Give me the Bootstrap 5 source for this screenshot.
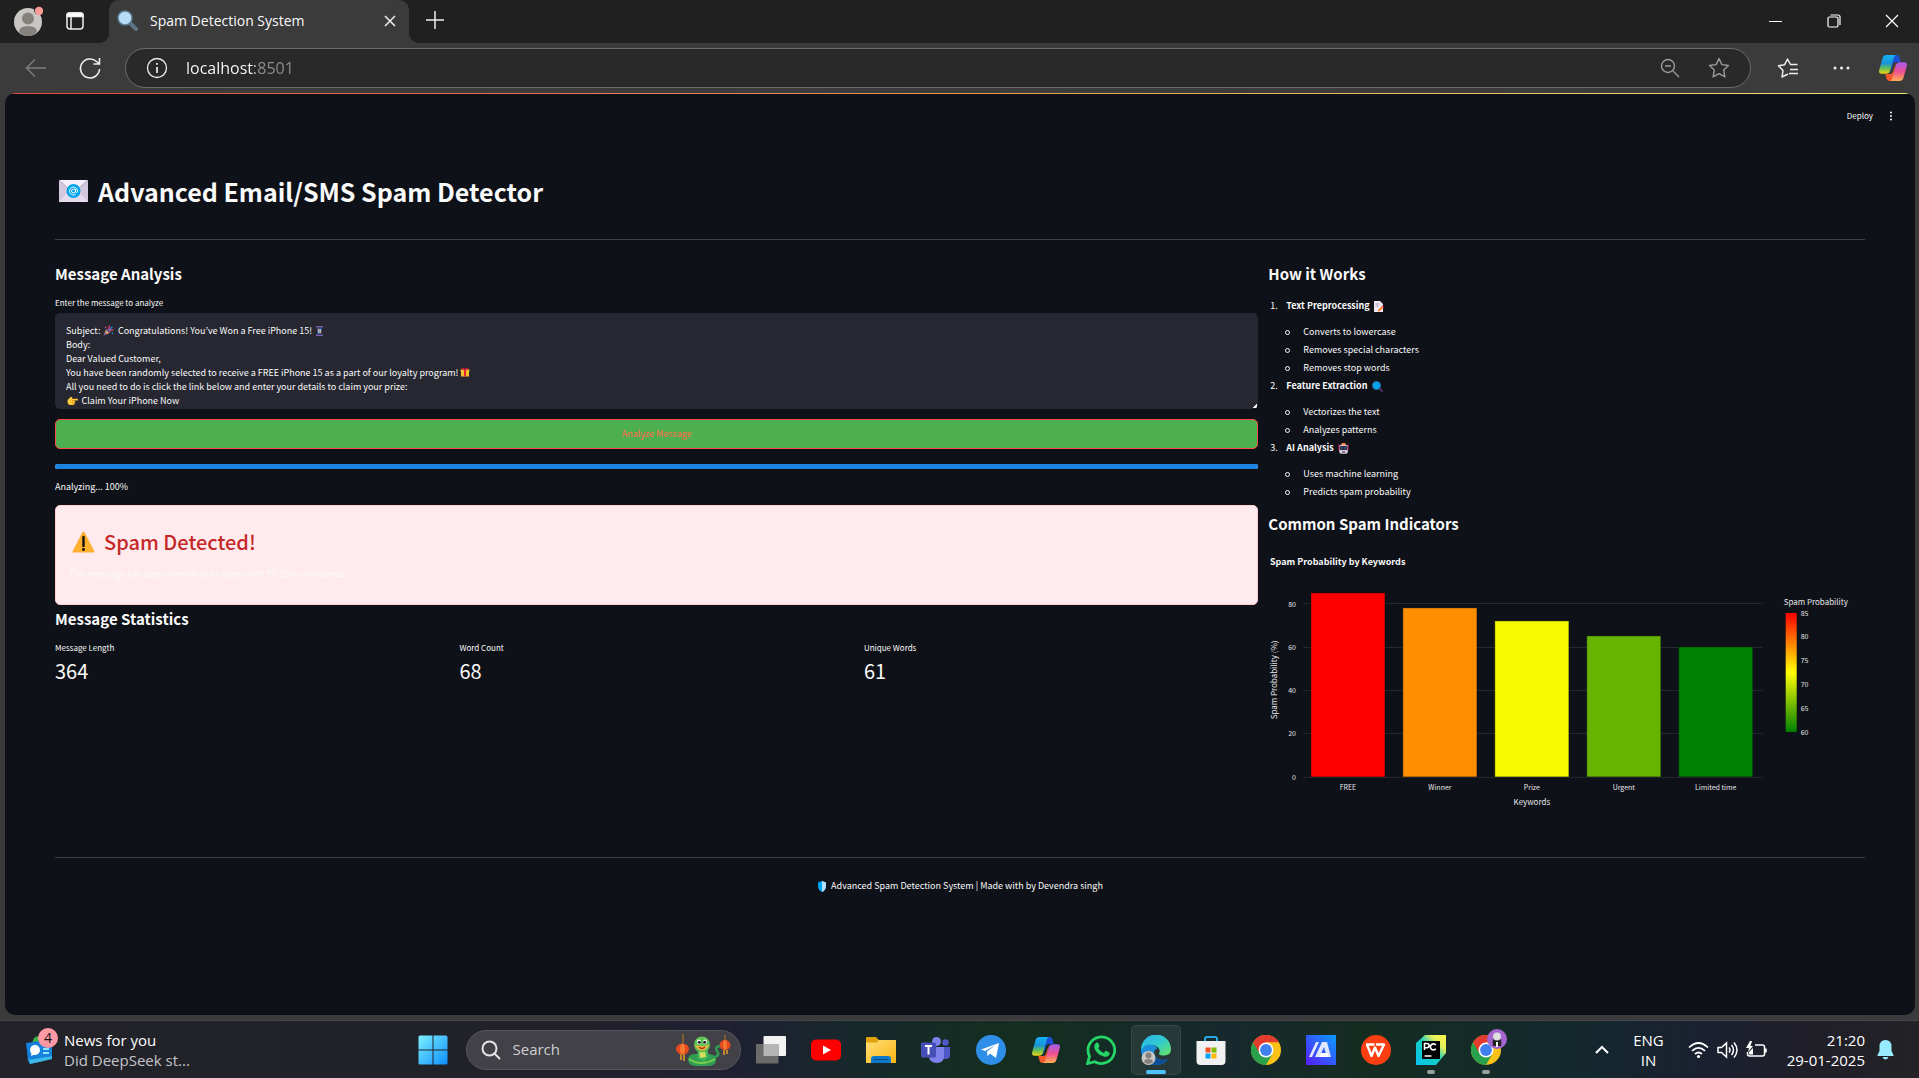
<!DOCTYPE html>
<html lang="en">
<head>
<meta charset="utf-8">
<meta name="viewport" content="width=device-width, initial-scale=1">
<title>Spam Detection System</title>
<link href="https://cdn.jsdelivr.net/npm/bootstrap@5.3.0/dist/css/bootstrap.min.css" rel="stylesheet">
<style>
:root{--app-font:"Noto Sans CJK JP","Noto Sans",sans-serif;--ui-font:"Open Sans","Noto Sans",sans-serif}
body{background:#3b3b3b;color:#fafafa;font-family:var(--ui-font)}
svg{display:block;flex:none}
button.plain{background:none;border:0;padding:0;color:inherit;display:flex;align-items:center;justify-content:center;flex:none}
/* browser frame */
.tabstrip{background:#202020;height:43px}
.strip-left{width:109px;padding:0 0 2px 13px;gap:23px}
.browser-tab{width:300px;background:#3b3b3b;border-radius:10px 10px 0 0;padding:0 13px 2px 8px;font-size:14px;position:relative}
.browser-tab::before,.browser-tab::after{content:"";position:absolute;bottom:0;width:10px;height:10px}
.browser-tab::before{left:-10px;background:radial-gradient(circle at 0 0,transparent 10px,#3b3b3b 10px)}
.browser-tab::after{right:-10px;background:radial-gradient(circle at 100% 0,transparent 10px,#3b3b3b 10px)}
.win-controls{gap:44px;padding:0 20px 2px 0}
.toolbar{height:50px;padding:0 12px 0 25px}
.omnibox{height:40px;background:#292929;border:1px solid #6c6c6c;border-radius:20px;padding:0 20px;margin:0 26px 0 23px}
.omnibox input{border:0;outline:0;padding:0;margin-left:18px;font-size:16px;color:transparent;background:linear-gradient(90deg,#fff 69px,#8f8f8f 69px);-webkit-background-clip:text;background-clip:text}
/* streamlit page */
.viewport{background:#0e1117;border-radius:10px;margin:0 4px 5px 5px;overflow:hidden;font-family:var(--app-font);font-size:9px;line-height:14px}
.viewport::before{content:"";display:block;height:1px;background:linear-gradient(90deg,#e0483f,#efe96f)}
.app-bar{height:44px;padding-right:22px;gap:16px;font-size:8px;font-weight:500}
.app-main{padding:0 50px}
.app-title{font-size:25px;line-height:34px;font-weight:700;margin:36px 0 31px;padding-left:3px;gap:9px}
.rule{height:1px;background:#3d4044;margin:0;border:0;opacity:1}
.app-main .row{--bs-gutter-x:10px}
.sec{font-size:15px;line-height:20px;font-weight:700;margin:0}
.msg{display:block;width:100%;height:96px;border:0;border-radius:5px;color:#fafafa;padding:11px 11px 0;resize:none;overflow:hidden;line-height:14px;outline:0;
background-color:#262730;background-repeat:no-repeat;
background-image:
url("data:image/svg+xml,%3Csvg xmlns='http://www.w3.org/2000/svg' viewBox='0 0 20 20'%3E%3Cpath d='M1 19 6 7l7 7z' fill='%23ddb35c'/%3E%3Cpath d='M1 19 3.500 13l4 4zM6 7l7 7-2 1-6-6z' fill='%237a4ba8'/%3E%3Cpath d='M9 9q4-3 2-8M12 12q2-4 7-3' fill='none' stroke='%23f1477f' stroke-width='2'/%3E%3Cpath d='M11 10l6-7' stroke='%2323a3f0' stroke-width='2'/%3E%3Ccircle cx='5' cy='4' r='1.500' fill='%23f1477f'/%3E%3Ccircle cx='17' cy='15' r='1.500' fill='%2323a3f0'/%3E%3C/svg%3E"),
url("data:image/svg+xml,%3Csvg xmlns='http://www.w3.org/2000/svg' viewBox='0 0 14 20'%3E%3Cpath d='M0 0h14v3H0zM0 17h14v3H0z' fill='%237660b0'/%3E%3Cpath d='M2 4h10v12H2z' fill='%23354b80'/%3E%3Cpath d='M4 6h3v4H4zM7 10h3v4H7z' fill='%23f6a04d'/%3E%3Cpath d='M7 6h3v4H7zM4 10h3v4H4z' fill='%2386c6f5'/%3E%3C/svg%3E"),
url("data:image/svg+xml,%3Csvg xmlns='http://www.w3.org/2000/svg' viewBox='0 0 20 20'%3E%3Cpath d='M1 5h18v4H1zM2 9h16v10H2z' fill='%23f9c02e'/%3E%3Cpath d='M8 5h4v14H8z' fill='%23e8223c'/%3E%3Cpath d='M10 5Q4 6 4 3t6 2q6-5 6-2t-6 2' fill='none' stroke='%23e8223c' stroke-width='2'/%3E%3C/svg%3E"),
url("data:image/svg+xml,%3Csvg xmlns='http://www.w3.org/2000/svg' viewBox='0 0 20 20'%3E%3Cpath d='M1 9 7 3l3 1-1 3h10q2 2 0 3h-6l2 2-1 2 0 2-2 2H5q-4-1-4-5z' fill='%23ffc83d'/%3E%3Cpath d='M9 10h5M9 13h5M9 16h4' stroke='%23d67d00'/%3E%3C/svg%3E"),
linear-gradient(135deg,transparent 50%,#fafafa 50%);
background-size:11px 11px,7px 10px,10px 10px,11px 11px,4px 4px;
background-position:48px 12px,261px 13px,405px 54px,12px 82px,right 1px bottom 1px}
.analyze{height:30px;margin-top:10px;background:#4caf50;border:1px solid #ff4b4b;border-radius:5px;color:#ff6a4b;font-size:9px;line-height:14px;padding:0}
.progress{--bs-progress-height:5px;--bs-progress-bar-bg:#1c83e1;--bs-progress-border-radius:3px;margin:15px 0 11px}
.spam-box{background:#ffebee;border:1px solid #ffcdd2;border-radius:5px;padding:21px 13px 23px;margin:11px 0 4px}
.spam-box h2{font-size:20px;line-height:30px;font-weight:500;color:#c62828;gap:9px;margin:0 0 10px;padding-left:3px}
.metric-label{font-size:8px;margin:12px 0 3px}
.metric-value{font-size:20px;line-height:26px}
.steps{list-style:none;margin:13px 0;padding:0 0 0 2px;line-height:18px}
.steps ul{list-style:none;padding:8px 0 0 15px;margin:0}
.steps .num{width:16px}
.steps .dot{width:5px;height:5px;border:1px solid #fafafa;border-radius:50%;margin-right:13px}
.chart{margin:13px 0 29px;width:100%;height:281px}
.chart text{font-size:7px;fill:#e6e6ea}
.chart .axis-title{font-size:8px}
.chart .chart-title{font-size:9px;font-weight:700;fill:#fafafa}
.app-foot{margin-top:21px;gap:4px}
/* windows taskbar */
.taskbar{height:58px;border-top:1px solid #45464a;color:#fff;background:linear-gradient(90deg,#222228 0,#21212b 30%,#1f2032 38%,#17292b 45%,#142e20 53%,#17292d 64%,#152c22 71%,#142b2a 78%,#13282d 82%,#1b2030 89%,#201f29 94%,#232226)}
.tb-side{flex:1 1 0;min-width:0;font-size:15px;line-height:20px;padding:0 25px}
.tb-btn{width:55px;height:50px;position:relative}
.tb-btn.active{background:#ffffff12;border-radius:5px;box-shadow:inset 0 0 0 1px #ffffff12;width:50px;margin:0 3px 0 2px}
.tb-btn.running::after,.tb-btn.active::after{content:"";position:absolute;bottom:1px;left:50%;width:8px;margin-left:-4px;height:4px;border-radius:2px;background:#9a9fa0}
.tb-btn.active::after{width:20px;margin-left:-10px;background:#4cc2ff}
.tb-search{width:275px;height:40px;border-radius:20px;background:#424148;border:1px solid #56555c;padding:0 9px 0 14px;margin:0 3px 0 5px}
.tb-search input{flex:1;min-width:0;border:0;background:none;outline:0;color:#fff;font-size:15px;padding:0;margin-left:12px}
.tb-search input::placeholder{color:#cfcfd2;opacity:1}
.news{gap:12px}
.news small{font-size:inherit;color:#c5c5c9}
</style>
<script src="https://cdn.jsdelivr.net/npm/bootstrap@5.3.0/dist/js/bootstrap.bundle.min.js"></script>
</head>
<body class="d-flex flex-column min-vh-100">

<svg width="0" height="0" class="position-absolute" aria-hidden="true">
  <defs>
    <linearGradient id="cpA" x1="0" y1="0" x2="0" y2="1"><stop offset="0" stop-color="#12b3f5"/><stop offset=".45" stop-color="#1c93d8"/><stop offset=".7" stop-color="#5fbf5a"/><stop offset="1" stop-color="#f5d311"/></linearGradient>
    <linearGradient id="cpB" x1="0" y1="0" x2="0" y2="1"><stop offset="0" stop-color="#a45cf0"/><stop offset=".5" stop-color="#ee4f93"/><stop offset="1" stop-color="#ffb052"/></linearGradient>
    <linearGradient id="edA" x1="0" y1="0" x2="1" y2="1"><stop offset="0" stop-color="#2bb0ea"/><stop offset=".5" stop-color="#31cbd0"/><stop offset="1" stop-color="#6be65a"/></linearGradient>
    <linearGradient id="winG" x1="0" y1="0" x2="1" y2="1"><stop offset="0" stop-color="#7df0ff"/><stop offset="1" stop-color="#0c8ffb"/></linearGradient>
    <linearGradient id="foldG" x1="0" y1="0" x2="1" y2="1"><stop offset="0" stop-color="#ffdf76"/><stop offset="1" stop-color="#fcb514"/></linearGradient>
    <linearGradient id="asusG" x1="0" y1="1" x2="1" y2="0"><stop offset="0" stop-color="#5a1cf5"/><stop offset="1" stop-color="#0a9cff"/></linearGradient>
    <linearGradient id="pyG" x1="0" y1="1" x2="1" y2="0"><stop offset="0" stop-color="#07c3f2"/><stop offset=".5" stop-color="#17cfc0"/><stop offset=".75" stop-color="#e8f05a"/><stop offset="1" stop-color="#fcf84a"/></linearGradient>
    <symbol id="copilot" viewBox="0 0 28 26">
      <path d="M14 0h3.500q2.500 0 3.200 3l1 4h-5q-2 0-2.700 2L11 19z" fill="#1b4fd8"/>
      <path d="M14 26h-3.500q-2.500 0-3.200-3l-1-4h5q2 0 2.700-2L17 7z" fill="#f4582c"/>
      <path d="M7.500 0H17q-1.600.6-2.300 3L11 16q-.9 2.800-4 2.800H2.500Q-.7 18.800.2 15L3.500 3.300Q4.500 0 7.500 0z" fill="url(#cpA)"/>
      <path d="M20.500 26H11q1.600-.6 2.300-3L17 10q.9-2.800 4-2.800h4.500q3.200 0 2.300 3.800l-3.300 11.700q-1 3.300-4 3.300z" fill="url(#cpB)"/>
    </symbol>
    <symbol id="chrome" viewBox="0 0 30 30">
      <circle cx="15" cy="15" r="15" fill="#fbc116"/>
      <path d="M15 15 2 7.500A15 15 0 0 1 28 7.500H15z" fill="#e33b2e"/>
      <path d="M2 7.500A15 15 0 0 0 15 30l6.500-11.200L15 15z" fill="#2aa24c"/>
      <path d="M15 7.500h13L21 19z" fill="#fbc116"/>
      <path d="M2 7.500 8.500 18.800 15 15V7.500z" fill="#e33b2e"/><path d="M2 7.500 8.500 18.800 12 20 9 24z" fill="#2aa24c"/>
      <circle cx="15" cy="15" r="7.500" fill="#fff"/><circle cx="15" cy="15" r="5.900" fill="#3f7fee"/>
    </symbol>
  </defs>
</svg>

<header>
  <div class="tabstrip d-flex align-items-center">
    <div class="strip-left d-flex align-items-center h-100 flex-shrink-0">
      <button class="plain" aria-label="Profile"><svg width="30" height="32" viewBox="0 0 30 32"><circle cx="15" cy="17" r="14" fill="#c9c7c4"/><circle cx="15" cy="13.500" r="6" fill="#85827e"/><path d="M6 27q0-6 9-6t9 6q-9 8-18 0z" fill="#85827e"/><circle cx="26" cy="5" r="5" fill="#202020"/><circle cx="26" cy="6" r="4.200" fill="#fb9a97"/></svg></button>
      <button class="plain" aria-label="Tab actions"><svg width="18" height="18" viewBox="0 0 18 18" fill="none" stroke="#eee" stroke-width="1.500"><rect x="1" y="1" width="16" height="16" rx="3"/><path d="M1 4.500V3q0-2 2-2h12q2 0 2 2v1.500z" fill="#fff"/><path d="M5 5v12"/></svg></button>
    </div>
    <div class="browser-tab d-flex align-items-center h-100">
      <svg width="21" height="21" viewBox="0 0 21 21"><path d="m12 12 7 7" stroke="#5f7482" stroke-width="4" stroke-linecap="round"/><circle cx="8" cy="8" r="7" fill="#b9dcf6" stroke="#5d7f96" stroke-width="1.500"/></svg>
      <span class="ms-2 ps-1 flex-grow-1">Spam Detection System</span>
      <button class="plain" aria-label="Close tab"><svg width="12" height="12" viewBox="0 0 12 12" stroke="#eee" stroke-width="1.500"><path d="m1 1 10 10M11 1 1 11"/></svg></button>
    </div>
    <button class="plain ms-3 pb-1" aria-label="New tab"><svg width="20" height="20" viewBox="0 0 20 20" stroke="#eee" stroke-width="1.500"><path d="M10 1v18M1 10h18"/></svg></button>
    <div class="win-controls ms-auto d-flex align-items-center">
      <button class="plain" aria-label="Minimize"><svg width="14" height="14" viewBox="0 0 14 14"><path d="M0 7.500h13" stroke="#fff"/></svg></button>
      <button class="plain" aria-label="Restore"><svg width="14" height="14" viewBox="0 0 14 14" fill="none" stroke="#fff" stroke-width="1.200"><rect x="1" y="3" width="10" height="10" rx="1.500"/><path d="M3.500 1H11q2 0 2 2v8"/></svg></button>
      <button class="plain" aria-label="Close"><svg width="14" height="14" viewBox="0 0 14 14" stroke="#fff" stroke-width="1.200"><path d="m1 1 12 12M13 1 1 13"/></svg></button>
    </div>
  </div>
  <div class="toolbar d-flex align-items-center">
    <button class="plain" aria-label="Back"><svg width="21" height="20" viewBox="0 0 21 20" fill="none" stroke="#7d7d7d" stroke-width="1.500"><path d="M21 10H1.500M10 1.500 1.500 10l8.500 8.500"/></svg></button>
    <button class="plain ms-4 ps-2" aria-label="Refresh"><svg width="24" height="24" viewBox="0 0 24 24" fill="none" stroke="#eee" stroke-width="1.600"><path d="M21.500 13A9.500 9.500 0 1 1 18.500 5.500L21 7.500M21.500 2v6h-6"/></svg></button>
    <div class="omnibox d-flex align-items-center flex-grow-1">
      <svg width="22" height="22" viewBox="0 0 22 22" fill="none" stroke="#eee" stroke-width="1.300"><circle cx="11" cy="11" r="9.500"/><path d="M11 10v6M11 6v1.800" stroke-width="1.700"/></svg>
      <input class="flex-grow-1" type="text" aria-label="Address" value="localhost:8501">
      <button class="plain" aria-label="Zoom"><svg width="20" height="20" viewBox="0 0 20 20" fill="none" stroke="#9a9a9a" stroke-width="1.400"><circle cx="8" cy="8" r="6.500"/><path d="m13 13 6 6M5 8h6"/></svg></button>
      <button class="plain ms-4 ps-1" aria-label="Favorite"><svg width="22" height="22" viewBox="0 0 22 22" fill="none" stroke="#9a9a9a" stroke-width="1.400" stroke-linejoin="round"><path d="m11 1.500 2.900 6.100 6.600.9-4.800 4.600 1.200 6.700-5.900-3.200-5.900 3.200 1.200-6.700L1.500 8.500l6.600-.9z"/></svg></button>
    </div>
    <button class="plain" aria-label="Favorites list"><svg width="22" height="22" viewBox="0 0 22 22" fill="none" stroke="#eee" stroke-width="1.500" stroke-linejoin="round"><path d="M11 17 5 20l1-6.500L1.500 8.700l6-.9L10.500 2l3 5.500h7M13 12.500h8M12 16.500h9"/></svg></button>
    <button class="plain ms-4 ps-2" aria-label="Settings"><svg width="20" height="20" viewBox="0 0 20 20" fill="#eee"><circle cx="4" cy="10" r="1.500"/><circle cx="10.500" cy="10" r="1.500"/><circle cx="17" cy="10" r="1.500"/></svg></button>
    <button class="plain ms-4 ps-1" aria-label="Copilot"><svg width="28" height="26"><use href="#copilot"/></svg></button>
  </div>
</header>

<main class="viewport flex-grow-1">
  <div class="app-bar d-flex align-items-center justify-content-end">
    <button class="plain">Deploy</button>
    <button class="plain" aria-label="Menu"><svg width="4" height="10" viewBox="0 0 4 10" fill="#fafafa"><circle cx="2" cy="1.500" r="1"/><circle cx="2" cy="5" r="1"/><circle cx="2" cy="8.500" r="1"/></svg></button>
  </div>
  <div class="app-main">
    <h1 class="app-title d-flex align-items-center">
      <svg width="31" height="24" viewBox="0 0 31 24"><rect x="1" y="1" width="29" height="22" fill="#d4c9de"/><path d="M1 23 11 12h9l10 11z" fill="#e5dcee"/><path d="M1 1h29L15.500 15z" fill="#f3eef8"/><path d="M1 1l12 11M30 1 18 12" stroke="#a89cb5"/><circle cx="15.500" cy="12" r="7" fill="#00a6ed"/><circle cx="15.500" cy="12" r="2" fill="none" stroke="#fff"/><path d="M17.500 10v3q1.500 1.500 2-1a4 4 0 1 0-2 3.500" fill="none" stroke="#fff" stroke-width=".9"/></svg>
      <span>Advanced Email/SMS Spam Detector</span>
    </h1>
    <hr class="rule mb-4">
    <div class="row">
      <div class="col-8">
        <h3 class="sec">Message Analysis</h3>
        <label for="msg" class="d-block metric-label">Enter the message to analyze</label>
        <textarea id="msg" class="msg" rows="6" spellcheck="false">Subject: &emsp;&ensp; Congratulations! You’ve Won a Free iPhone 15!
Body:
Dear Valued Customer,
You have been randomly selected to receive a FREE iPhone 15 as a part of our loyalty program!
All you need to do is click the link below and enter your details to claim your prize:
&emsp;&ensp; Claim Your iPhone Now</textarea>
        <button class="analyze w-100 d-block">Analyze Message</button>
        <div class="progress" role="progressbar" aria-label="Analysis" aria-valuenow="100" aria-valuemin="0" aria-valuemax="100"><div class="progress-bar" style="width:100%"></div></div>
        <div>Analyzing... 100%</div>
        <div class="spam-box">
          <h2 class="d-flex align-items-center"><svg width="23" height="22" viewBox="0 0 23 22"><path d="M11.500.5Q12.300.5 13 2l9.500 18.500q.5 1-1 1h-20q-1.500 0-1-1L10 2q.7-1.500 1.500-1.500z" fill="#ffb02e"/><path d="M11.500 6v9" stroke="#111" stroke-width="2.400" stroke-linecap="round"/><circle cx="11.500" cy="18.500" r="1.400" fill="#111"/></svg><span>Spam Detected!</span></h2>
          <div>This message has been identified as spam with 95.65% confidence.</div>
        </div>
        <h3 class="sec">Message Statistics</h3>
        <div class="row">
          <div class="col-4"><div class="metric-label">Message Length</div><div class="metric-value">364</div></div>
          <div class="col-4"><div class="metric-label">Word Count</div><div class="metric-value">68</div></div>
          <div class="col-4"><div class="metric-label">Unique Words</div><div class="metric-value">61</div></div>
        </div>
      </div>
      <div class="col-4">
        <h3 class="sec">How it Works</h3>
        <ol class="steps">
          <li><div class="d-flex align-items-center"><span class="num">1.</span><b>Text Preprocessing</b><svg class="ms-1" width="10" height="11" viewBox="0 0 10 11"><path d="M0 0h6l3 3v8H0z" fill="#efe7f5"/><path d="M1.500 3h4M1.500 5h3" stroke="#998ea4" stroke-width=".8"/><path d="m4 9 4-4 1.500 1.500L6 10l-2 .5z" fill="#ff822d"/><path d="m8 5 1-.800L10 6l-.7.600z" fill="#ca0b4a"/></svg></div>
            <ul><li class="d-flex align-items-center"><i class="dot"></i>Converts to lowercase</li><li class="d-flex align-items-center"><i class="dot"></i>Removes special characters</li><li class="d-flex align-items-center"><i class="dot"></i>Removes stop words</li></ul></li>
          <li><div class="d-flex align-items-center"><span class="num">2.</span><b>Feature Extraction</b><svg class="ms-1" width="11" height="11" viewBox="0 0 11 11"><path d="m7 7 3 3" stroke="#533566" stroke-width="2" stroke-linecap="round"/><circle cx="4.500" cy="4.500" r="4" fill="#00a6ed" stroke="#2f6fa8"/></svg></div>
            <ul><li class="d-flex align-items-center"><i class="dot"></i>Vectorizes the text</li><li class="d-flex align-items-center"><i class="dot"></i>Analyzes patterns</li></ul></li>
          <li><div class="d-flex align-items-center"><span class="num">3.</span><b>AI Analysis</b><svg class="ms-1" width="11" height="11" viewBox="0 0 11 11"><rect x="3.500" y="0" width="4" height="2" fill="#ff822d"/><path d="M.8 1v6M10.200 1v6" stroke="#ca0b4a"/><rect x="1.200" y="1.800" width="8.600" height="9" rx="2" fill="#d5ccdb"/><rect x="1.500" y="3" width="8" height="4" rx="1.500" fill="#321b41"/><path d="M3 5h1.500M6.500 5H8" stroke="#26c9fc"/><path d="M4 9h3" stroke="#321b41"/></svg></div>
            <ul><li class="d-flex align-items-center"><i class="dot"></i>Uses machine learning</li><li class="d-flex align-items-center"><i class="dot"></i>Predicts spam probability</li></ul></li>
        </ol>
        <h3 class="sec">Common Spam Indicators</h3>
        <svg class="chart" viewBox="0 0 597 281" preserveAspectRatio="xMinYMin meet" role="img" aria-label="Spam Probability by Keywords">
          <defs><linearGradient id="scale" x1="0" y1="0" x2="0" y2="1"><stop offset="0" stop-color="#f00"/><stop offset=".25" stop-color="#ff8000"/><stop offset=".5" stop-color="#ff0"/><stop offset="1" stop-color="#008000"/></linearGradient></defs>
          <text class="chart-title" x="2" y="18">Spam Probability by Keywords</text>
          <path d="M35 56.500h460M35 100.500h460M35 143.500h460M35 186.500h460M35 230.500h460" stroke="#272a31"/>
          <g stroke="#0e1117" stroke-opacity=".35">
            <rect x="43" y="46" width="74" height="184" fill="#f00"/>
            <rect x="135" y="61" width="74" height="169" fill="#ff8f00"/>
            <rect x="227" y="74" width="74" height="156" fill="#f5fa00"/>
            <rect x="319" y="89" width="74" height="141" fill="#66b300"/>
            <rect x="411" y="100" width="74" height="130" fill="#008000"/>
          </g>
          <g text-anchor="end"><text x="28" y="60">80</text><text x="28" y="103">60</text><text x="28" y="146">40</text><text x="28" y="189">20</text><text x="28" y="233">0</text></g>
          <g text-anchor="middle"><text x="80" y="243">FREE</text><text x="172" y="243">Winner</text><text x="264" y="243">Prize</text><text x="356" y="243">Urgent</text><text x="448" y="243">Limited time</text>
          <text class="axis-title" x="264" y="258">Keywords</text>
          <text class="axis-title" transform="translate(9 133) rotate(-90)">Spam Probability (%)</text></g>
          <text class="axis-title" x="516" y="58">Spam Probability</text>
          <rect x="518" y="66" width="11" height="119" fill="url(#scale)"/>
          <text x="533" y="69">85</text><text x="533" y="92">80</text><text x="533" y="116">75</text><text x="533" y="140">70</text><text x="533" y="164">65</text><text x="533" y="188">60</text>
        </svg>
      </div>
    </div>
    <hr class="rule">
    <footer class="app-foot d-flex align-items-center justify-content-center">
      <svg width="10" height="11" viewBox="0 0 10 11"><path d="M5 0 9 1.500V5q0 4-4 6Q1 9 1 5V1.500z" fill="#00a6ed"/><path d="M5 0 9 1.500V5q0 4-4 6z" fill="#b5dcf8"/></svg>
      <span>Advanced Spam Detection System | Made with by Devendra singh</span>
    </footer>
  </div>
</main>

<nav class="taskbar d-flex align-items-center" aria-label="Taskbar">
  <div class="tb-side">
    <button class="plain news text-start">
      <svg width="27" height="30" viewBox="0 0 27 30" overflow="visible"><path d="M9 3q3-3 7-1v6H7z" fill="#37b34a"/><path d="M1 8 22 5l5 3v16L5 29 3 26z" fill="#1471cf"/><path d="M5 29 3 23l24-2v3z" fill="#3cb9e8"/><path d="M1 8h22q4 0 4 4v9L4 25z" fill="#1583dc"/><circle cx="10" cy="15" r="5" fill="#fff"/><path d="m6 21 1-5 4 3z" fill="#fff"/><path d="M18 14h6M18 18h6" stroke="#8fe3ff" stroke-width="2"/><circle cx="23" cy="3" r="10" fill="#ff99a4"/><text x="23" y="8" font-size="14" text-anchor="middle" fill="#111">4</text></svg>
      <span>News for you<br><small>Did DeepSeek st...</small></span>
    </button>
  </div>
  <div class="d-flex align-items-center">
    <button class="plain tb-btn" aria-label="Start"><svg width="30" height="30" viewBox="0 0 30 30" fill="url(#winG)"><path d="M2 .500h12.500v14H.500V2Q.500.500 2 .500zM15.500.500H28q1.500 0 1.500 1.500v12.500h-14zM.500 15.500h14v14H2q-1.500 0-1.500-1.500zM15.500 15.500h14V28q0 1.500-1.500 1.500H15.500z"/></svg></button>
    <div class="tb-search d-flex align-items-center">
      <svg width="20" height="20" viewBox="0 0 20 20" fill="none" stroke="#e4e4e6" stroke-width="2"><circle cx="8.500" cy="8.500" r="7"/><path d="m13.500 13.500 5 5" stroke-linecap="round"/></svg>
      <input type="search" placeholder="Search" aria-label="Search">
      <svg width="55" height="34" viewBox="0 0 55 34"><path d="M7 1v9M49 2v6" stroke="#c07a1a"/><path d="M5 21v6M8 21v7M48 17v5M51 17v4" stroke="#e8a02c" stroke-width="1.500"/><ellipse cx="6.500" cy="16" rx="6.500" ry="5.500" fill="#e4491f"/><ellipse cx="6.500" cy="16" rx="2.500" ry="5.500" fill="#f4772e"/><ellipse cx="49" cy="12" rx="5.500" ry="5" fill="#e4491f"/><ellipse cx="49" cy="12" rx="2" ry="5" fill="#f4772e"/><path d="M36 25q9-2 5-7-3-4 3-5" fill="none" stroke="#2f9e52" stroke-width="2.500"/><path d="M12 26q1-5 7-5h13q8 0 8 6 0 6-9 6H20q-8 0-8-7z" fill="#2f9e52"/><path d="M13 26q12 8 26 0" fill="none" stroke="#7ccf4e" stroke-width="2"/><path d="M22 15h9l2 8-5 6-7-4z" fill="#3fb358"/><path d="M23 17h6l1 7-6 1z" fill="#d8e05a"/><ellipse cx="26" cy="11.500" rx="8" ry="8" fill="#5cc052"/><path d="M18.500 12q7.500 11 15 0-7.500 2-15 0z" fill="#f2b53c"/><path d="M23 14q3 3 6 0" stroke="#a8321c" fill="none" stroke-width="1.300"/><ellipse cx="23" cy="9" rx="1.900" ry="2.400" fill="#fff"/><ellipse cx="29" cy="9" rx="1.900" ry="2.400" fill="#fff"/><circle cx="23.300" cy="9.300" r="1.400" fill="#112"/><circle cx="28.700" cy="9.300" r="1.400" fill="#112"/></svg>
    </div>
    <button class="plain tb-btn" aria-label="Task view"><svg width="30" height="30" viewBox="0 0 30 30"><rect x="7.500" y="1" width="22.500" height="20" rx="1" fill="#f2f2f3"/><rect y="9" width="22.500" height="19.500" rx="1" fill="#6b6b6b"/><path d="M7.500 9h15v12h-15z" fill="#b5b5b6"/></svg></button>
    <button class="plain tb-btn" aria-label="YouTube"><svg width="30" height="30" viewBox="0 0 30 30"><rect y="4.500" width="30" height="21" rx="5" fill="#f00"/><path d="m12 10.500 8 4.500-8 4.500z" fill="#fff"/></svg></button>
    <button class="plain tb-btn" aria-label="File Explorer"><svg width="30" height="30" viewBox="0 0 30 30"><path d="M0 3q0-1 1-1h9l3 3h16q1 0 1 1v4H0z" fill="#e0a10c"/><path d="M0 7.500h10.500L13 5h16q1 0 1 1v22H0z" fill="url(#foldG)"/><path d="M5 28v-4q0-3 3-3h14q3 0 3 3v4z" fill="#0f78c8"/><path d="M8 24.500h14" stroke="#0a4d87"/></svg></button>
    <button class="plain tb-btn" aria-label="Teams"><svg width="30" height="30" viewBox="0 0 30 30"><circle cx="24.500" cy="7.500" r="3.200" fill="#5059c9"/><path d="M20 12h9v8q0 4-4 4h-5z" fill="#5059c9"/><circle cx="15.500" cy="6.500" r="4.500" fill="#7b83eb"/><path d="M8 12h15v9q0 7-7 7-8 0-8-7z" fill="#7b83eb"/><rect y="7.500" width="15" height="15" rx="1.500" fill="#464eb8"/><path d="M4 11h7M7.500 11v8.500" stroke="#fff" stroke-width="2"/></svg></button>
    <button class="plain tb-btn" aria-label="Telegram"><svg width="30" height="30" viewBox="0 0 30 30"><circle cx="15" cy="15" r="15" fill="#2f8fe8"/><path d="m5 14.500 18-6.500-3 15-6-4.500-2.500 2.500-.5-4.500 8-6-10 5.500z" fill="#fff"/></svg></button>
    <button class="plain tb-btn" aria-label="Copilot"><svg width="28" height="26"><use href="#copilot"/></svg></button>
    <button class="plain tb-btn" aria-label="WhatsApp"><svg width="30" height="30" viewBox="0 0 30 30"><path d="m1.500 28.500 2-7.300A13.300 13.300 0 1 1 8.700 26.700z" fill="none" stroke="#25d366" stroke-width="2.800"/><path d="M10.500 7.500q1.500-.5 2 1l1 2.500q0 1-1.300 2.200 2 3.300 5.600 4.800l1.700-2q.5-.5 1 0l2.700 1.400q.8.600.3 2-1.500 3-5 2.300Q11 20 8.500 13.500 7.500 9.500 10.500 7.500z" fill="#25d366"/></svg></button>
    <button class="plain tb-btn active" aria-label="Edge"><svg width="30" height="30" viewBox="0 0 30 30"><path d="M0 15Q0 27 12 30q10 1 15-6-9 3-13-3-3-5 1-9Q5 5 0 15z" fill="#1472c4"/><path d="M12 30q10 1 15-6-9 3-13-3-7 1-2 9z" fill="#0f4f98"/><path d="M0 15A15 15 0 0 1 30 14q0 6.500-7 6.500-5 0-5-2 2-3-1-6-4-3.500-9-2T0 15z" fill="url(#edA)"/><path d="M0 17q2-8 9-7.500T16 14q-3 0-3 5-8 5-13-2z" fill="#1c8fdb"/><circle cx="7.500" cy="23" r="7" fill="#c9c7c4"/><circle cx="7.500" cy="20.500" r="3" fill="#85827e"/><path d="M3 27q0-3 4.500-3t4.500 3q-4.500 4-9 0z" fill="#85827e"/></svg></button>
    <button class="plain tb-btn" aria-label="Store"><svg width="30" height="30" viewBox="0 0 30 30"><path d="M9 7V4q0-2 2-2h8q2 0 2 2v3" fill="none" stroke="#29a9e8" stroke-width="2"/><path d="M.500 6h29v20q0 4-4 4h-21q-4 0-4-4z" fill="#f0f1f2"/><path d="M9.500 12.500h5v5h-5z" fill="#f25022"/><path d="M15.500 12.500h5v5h-5z" fill="#7fba00"/><path d="M9.500 18.500h5v5h-5z" fill="#00a4ef"/><path d="M15.500 18.500h5v5h-5z" fill="#ffb900"/></svg></button>
    <button class="plain tb-btn" aria-label="Chrome"><svg width="30" height="30"><use href="#chrome"/></svg></button>
    <button class="plain tb-btn" aria-label="MyASUS"><svg width="30" height="30" viewBox="0 0 30 30"><path d="M0 0h30v30H0z" fill="url(#asusG)"/><path d="M3 22 10 7h3L6 22zM9 22l7-15h5l4 15h-4l-3-10-4.500 10z" fill="#dfe6ff"/><path d="M15 18h7v4h-9z" fill="#fff"/></svg></button>
    <button class="plain tb-btn" aria-label="WPS Office"><svg width="30" height="30" viewBox="0 0 30 30"><circle cx="15" cy="15" r="15" fill="#fb3f12"/><path d="M5 9.500h8.500M6 9.500 10.500 21 14 12.500 17.500 21l5.500-11.500h-8" fill="none" stroke="#fff" stroke-width="2.400" stroke-linejoin="round"/></svg></button>
    <button class="plain tb-btn running" aria-label="PyCharm"><svg width="30" height="30" viewBox="0 0 30 30"><path d="M0 8 9 0h21v18L20 30H0z" fill="url(#pyG)"/><path d="M6 6h18v18H6z" fill="#000"/><path d="M8.500 15V8.500h2.500a2 2 0 0 1 0 4.200H8.500M19.800 10a3 3 0 1 0 0 3.700M8.500 21h7" fill="none" stroke="#fff" stroke-width="1.600"/></svg></button>
    <button class="plain tb-btn running" aria-label="Chrome profile"><svg width="30" height="30" viewBox="0 0 30 30" overflow="visible"><use href="#chrome"/><circle cx="26" cy="4" r="10" fill="#a565cf"/><path d="M22 11q-1-5 1-8h6q2 3 1 8z" fill="#222"/><circle cx="26" cy="1.500" r="4" fill="#ddd"/><path d="M25 7h2v5h-2z" fill="#eee"/></svg></button>
  </div>
  <div class="tb-side d-flex align-items-center justify-content-end">
    <button class="plain" aria-label="Hidden icons"><svg width="14" height="9" viewBox="0 0 14 9" fill="none" stroke="#fff" stroke-width="2"><path d="m1 8 6-6 6 6"/></svg></button>
    <button class="plain ms-4 text-center">ENG<br>IN</button>
    <button class="plain ms-4 gap-2" aria-label="Network, sound and battery">
      <svg width="21" height="18" viewBox="0 0 21 18" fill="none" stroke="#fff" stroke-width="1.700"><path d="M1 6.500q9.500-9 19 0M4 9.800q6.500-6 13 0M7 13q3.500-3 7 0"/><circle cx="10.500" cy="15.500" r="1.600" fill="#fff" stroke="none"/></svg>
      <svg width="21" height="18" viewBox="0 0 21 18" fill="none" stroke="#fff" stroke-width="1.500"><path d="M1 6.500h3.500L9.500 2v14l-5-4.500H1zM12 6.500q2 2.500 0 5M14.500 4q4 5 0 10M17 1.500q6 7.500 0 15"/></svg>
      <svg width="21" height="18" viewBox="0 0 21 18" fill="none" stroke="#fff" stroke-width="1.500"><path d="M9 4h7.500q2 0 2 2v7q0 2-2 2h-13q-2 0-2-2v-2M20 7.500v4"/><path d="m4 0-4 7h3l-1 4 5-6H4.500L6 0z" fill="#fff" stroke="none"/><path d="M3 13.500V11l4-4v6.500z" fill="#fff" stroke="none"/></svg>
    </button>
    <button class="plain ms-3 ps-1 text-end">21:20<br>29-01-2025</button>
    <button class="plain ms-2 ps-1" aria-label="Notifications"><svg width="17" height="20" viewBox="0 0 17 20" fill="#99ebff"><path d="M8.500 0q6 0 6 6.500V11l2 4v1H.500v-1l2-4V6.500Q2.500 0 8.500 0zM5.500 17h6q-1 2.500-3 2.500t-3-2.500z"/></svg></button>
  </div>
</nav>
</body>
</html>
